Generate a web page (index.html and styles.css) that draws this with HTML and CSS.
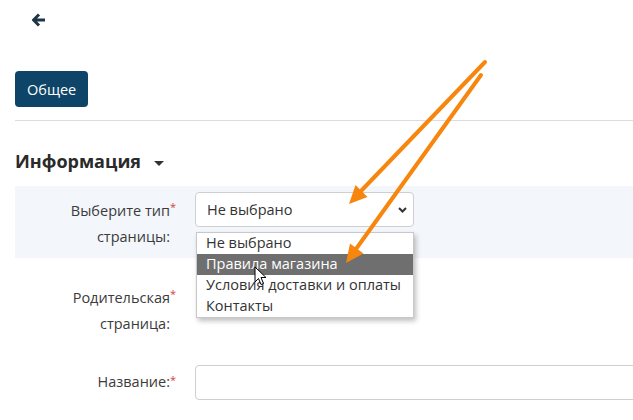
FILE: index.html
```html
<!DOCTYPE html>
<html lang="ru">
<head>
    <meta charset="UTF-8">
    <title>Страница</title>
    <link rel="stylesheet" href="styles.css">
</head>
<body>
    <div class="page">
        <div class="topbar">
            <a href="#" class="back">
                <svg width="14" height="14" viewBox="0 0 14 14"><path d="M7 1.5 L1.5 7 L7 12.5 M2 7 H13" fill="none" stroke="#1d3547" stroke-width="3" stroke-linejoin="miter"/></svg>
            </a>
        </div>

        <div class="tabs">
            <button class="tab active">Общее</button>
        </div>

        <h2 class="section-title">Информация <span class="caret"></span></h2>

        <form class="form">
            <div class="row highlight">
                <label class="label required">Выберите тип<br>страницы:</label>
                <div class="control">
                    <div class="select">
                        <span>Не выбрано</span>
                        <svg class="chevron" width="9" height="6" viewBox="0 0 9 6"><path d="M1 1 L4.5 4.5 L8 1" fill="none" stroke="#333" stroke-width="2"/></svg>
                    </div>
                </div>
            </div>

            <div class="row row-parent">
                <label class="label required">Родительская<br>страница:</label>
                <div class="control"></div>
            </div>

            <div class="row row-name">
                <label class="label required single">Название:</label>
                <div class="control">
                    <input type="text" class="input">
                </div>
            </div>
        </form>

        <!-- открытый список -->
        <ul class="options">
            <li>Не выбрано</li>
            <li class="selected">Правила магазина</li>
            <li>Условия доставки и оплаты</li>
            <li>Контакты</li>
        </ul>

        <svg class="cursor" width="14" height="21" viewBox="0 0 14 21">
            <path d="M1 1 L1 16 L4.5 12.5 L7 18.5 L9.5 17.5 L7 11.5 L12 11.5 Z" fill="#fff" stroke="#000" stroke-width="1"/>
        </svg>

        <svg class="arrows" width="633" height="420" viewBox="0 0 633 420">
            <line x1="485" y1="62" x2="361" y2="191" stroke="#f7860f" stroke-width="4" stroke-linecap="round"/>
            <polygon points="349,204 367.5,197 355.5,185" fill="#f7860f"/>
            <line x1="481" y1="75" x2="356" y2="249" stroke="#f7860f" stroke-width="4" stroke-linecap="round"/>
            <polygon points="346,263 363.5,253.5 350,243.5" fill="#f7860f"/>
        </svg>
    </div>
</body>
</html>
```

FILE: styles.css
```css
body {
    margin: 0;
    font-family: 'Open Sans', 'Noto Sans', sans-serif;
    background-color: #fff;
    color: #333;
}

.page {
    position: relative;
    width: 633px;
    height: 420px;
    overflow: hidden;
    padding-left: 15px;
    box-sizing: border-box;
}

.topbar {
    height: 71px;
}

.back {
    display: inline-block;
    margin: 13px 0 0 17px;
    line-height: 0;
}

.tabs {
    padding-bottom: 13px;
    border-bottom: 1px solid #dcdcdc;
}

.tab {
    height: 36px;
    padding: 0 12px;
    border: none;
    border-radius: 4px;
    background-color: #0d4468;
    color: #fff;
    font-family: inherit;
    font-size: 14.5px;
}

.section-title {
    margin: 29px 0 14px;
    font-size: 18px;
    line-height: 22px;
    font-weight: 700;
    color: #2a2a2a;
}

.caret {
    display: inline-block;
    margin-left: 8px;
    vertical-align: middle;
    border-left: 5px solid transparent;
    border-right: 5px solid transparent;
    border-top: 5px solid #333;
}

.row {
    display: flex;
}

.row.highlight {
    background-color: #f3f7fb;
    padding: 6px 0 8px;
}

.row-parent {
    margin-top: 15px;
    height: 80px;
    padding-top: 6px;
}

.row-name {
    padding-top: 6px;
}

.label {
    width: 155px;
    text-align: right;
    font-size: 14.5px;
    line-height: 26px;
    color: #3b3b3b;
    padding-top: 6px;
    position: relative;
}

.label.single {
    padding-top: 4px;
}

.required::after {
    content: "*";
    position: absolute;
    right: -6px;
    top: 2px;
    color: #d43f3a;
    font-size: 11px;
}

.control {
    margin-left: 25px;
    flex: 1;
}

.select {
    width: 219px;
    height: 35px;
    box-sizing: border-box;
    border: 1px solid #cfcfcf;
    border-radius: 4px;
    background-color: #fff;
    display: flex;
    align-items: center;
    justify-content: space-between;
    padding: 0 6px 0 11px;
    font-size: 14.5px;
    color: #333;
}

.chevron {
    margin-top: 1px;
}

.input {
    display: block;
    width: calc(100% + 20px);
    height: 35px;
    box-sizing: border-box;
    border: 1px solid #cfcfcf;
    border-radius: 4px;
}

/* Выпадающий список */
.options {
    position: absolute;
    left: 196px;
    top: 232px;
    width: 218px;
    margin: 0;
    padding: 0;
    list-style: none;
    background-color: #fff;
    border: 1px solid #c8c8c8;
    box-sizing: border-box;
    box-shadow: 2px 3px 5px rgba(0,0,0,0.25);
    font-size: 14.5px;
}

.options li {
    height: 21px;
    line-height: 20px;
    padding-left: 9px;
    color: #333;
    white-space: nowrap;
}

.options li.selected {
    background-color: #6f6f6f;
    color: #fff;
}

.cursor {
    position: absolute;
    left: 254px;
    top: 266px;
}

.arrows {
    position: absolute;
    left: 0;
    top: 0;
    pointer-events: none;
}
```
